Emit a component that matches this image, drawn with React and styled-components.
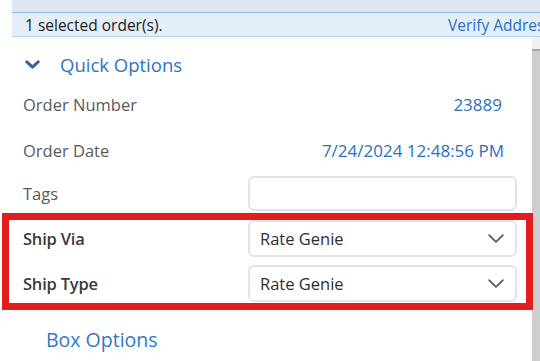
import React from "react";
import styled, { createGlobalStyle } from "styled-components";

const Global = createGlobalStyle`
  html, body { margin: 0; padding: 0; background: #fff; }
  body { font-family: "Open Sans", "Noto Sans", sans-serif; overflow: hidden; }
  * { box-sizing: border-box; }
`;

const Page = styled.div`
  width: 540px;
  height: 361px;
  position: relative;
  overflow: hidden;
  display: flex;
  flex-direction: column;
`;

const TopStrip = styled.div`
  margin-left: 12px;
  height: 12px;
  background: #dfe6ef;
`;

const SelectionBar = styled.div`
  margin-left: 12px;
  height: 25px;
  background: #e3eef9;
  border-top: 1px solid #8dbce8;
  border-bottom: 1px solid #b3d3f1;
  display: grid;
  grid-template-columns: 1fr 92px;
  align-items: center;
  overflow: hidden;
  font-size: 15.5px;
  white-space: nowrap;
`;

const SelText = styled.span`
  padding-left: 13px;
  color: #222;
`;

const VerifyLink = styled.span`
  color: #2b6fbf;
  overflow: hidden;
`;

const Body = styled.div`
  flex: 1;
  display: flex;
`;

const Content = styled.div`
  flex: 1;
  display: flex;
  flex-direction: column;
  padding: 8px 15px 0 23px;
`;

const Scrollbar = styled.div`
  width: 8px;
  display: flex;
  flex-direction: column;
  background: #cdcdcd;
`;

const ScrollArrow = styled.div`
  height: 14px;
  background: #f0f0f0;
  border-bottom: 2px solid #a8a8a8;
`;

const SectionHeader = styled.div`
  display: flex;
  align-items: center;
  height: 38px;
  margin: 0 0 1px 2px;
  gap: 20px;
  color: #2d74c6;
  font-size: 18.5px;
`;

const Row = styled.div`
  display: grid;
  grid-template-columns: 225px 1fr;
  align-items: center;
  height: ${(p) => p.$h || 46}px;
  margin-bottom: ${(p) => p.$mb || 0}px;
`;

const Label = styled.span`
  font-size: 16.5px;
  color: ${(p) => (p.$bold ? "#3a3a3a" : "#5a5a5a")};
  font-weight: ${(p) => (p.$bold ? 600 : 400)};
  letter-spacing: ${(p) => (p.$bold ? "-0.2px" : "0")};
`;

const Value = styled.span`
  justify-self: end;
  font-size: 17px;
  color: #2c6fbe;
  padding-right: ${(p) => p.$pr || 0}px;
`;

const Field = styled.div`
  height: ${(p) => p.$h || 37}px;
  border: 2px solid #e1e5ea;
  border-radius: 6px;
  background: #fff;
  display: flex;
  align-items: center;
  justify-content: space-between;
  padding: 0 11px 0 10px;
  font-size: 16.5px;
  color: #2e2e2e;
`;

const BoxOptions = styled.div`
  margin-top: 19px;
  margin-left: 23px;
  height: 36px;
  display: flex;
  align-items: center;
  color: #3078c8;
  font-size: 19.5px;
`;

const Highlight = styled.div`
  position: absolute;
  left: 2px;
  top: 213px;
  width: 531px;
  height: 97px;
  border: 7px solid #e21d1d;
  pointer-events: none;
`;

const Chevron = ({ color = "#555", w = 16, h = 9, sw = 1.6 }) => (
  <svg width={w} height={h} viewBox={`0 0 ${w} ${h}`} fill="none">
    <polyline
      points={`${sw / 2 + 0.3},${sw / 2 + 0.3} ${w / 2},${h - sw / 2 - 0.3} ${w - sw / 2 - 0.3},${sw / 2 + 0.3}`}
      stroke={color}
      strokeWidth={sw}
      strokeLinecap="round"
      strokeLinejoin="round"
    />
  </svg>
);

export default function App() {
  return (
    <>
      <Global />
      <Page>
        <TopStrip />
        <SelectionBar>
          <SelText>1 selected order(s).</SelText>
          <VerifyLink>Verify Addres</VerifyLink>
        </SelectionBar>
        <Body>
          <Content>
            <SectionHeader>
              <Chevron color="#2b67ae" w={15} h={9} sw={3} />
              <span>Quick Options</span>
            </SectionHeader>
            <Row $h={40} $mb={4}>
              <Label>Order Number</Label>
              <Value $pr={15}>23889</Value>
            </Row>
            <Row $h={44} $mb={4}>
              <Label>Order Date</Label>
              <Value $pr={13}>7/24/2024 12:48:56 PM</Value>
            </Row>
            <Row $h={35} $mb={9}>
              <Label>Tags</Label>
              <Field $h={35} />
            </Row>
            <Row $h={37} $mb={8}>
              <Label $bold>Ship Via</Label>
              <Field>
                <span>Rate Genie</span>
                <Chevron />
              </Field>
            </Row>
            <Row $h={37}>
              <Label $bold>Ship Type</Label>
              <Field>
                <span>Rate Genie</span>
                <Chevron />
              </Field>
            </Row>
            <BoxOptions>Box Options</BoxOptions>
          </Content>
          <Scrollbar>
            <ScrollArrow />
          </Scrollbar>
        </Body>
        <Highlight />
      </Page>
    </>
  );
}
